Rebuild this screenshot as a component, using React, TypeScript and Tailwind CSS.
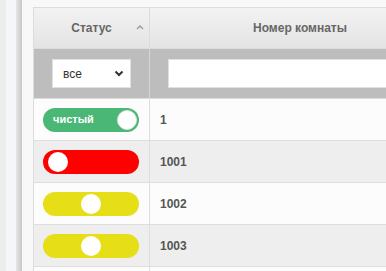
import React from "react";

type Row = { room: string; status: "clean" | "dirty" | "check" | "none" };

const rows: Row[] = [
  { room: "1", status: "clean" },
  { room: "1001", status: "dirty" },
  { room: "1002", status: "check" },
  { room: "1003", status: "check" },
  { room: "", status: "none" },
];

function StatusToggle({ status }: { status: Row["status"] }) {
  if (status === "none") return null;
  if (status === "clean") {
    return (
      <div className="flex h-[24px] w-[96px] items-center justify-between rounded-full bg-[#4bb776] pl-[10px] pr-[2px]">
        <span className="text-[11px] font-bold text-white">чистый</span>
        <span className="h-[20px] w-[20px] rounded-full border border-[#e2e2e2] bg-white" />
      </div>
    );
  }
  if (status === "dirty") {
    return (
      <div className="flex h-[24px] w-[96px] items-center rounded-full bg-[#ff0000] pl-[5px]">
        <span className="h-[20px] w-[20px] rounded-full bg-white" />
      </div>
    );
  }
  return (
    <div className="flex h-[24px] w-[96px] items-center justify-center rounded-full bg-[#e6df18]">
      <span className="h-[20px] w-[20px] rounded-full bg-white" />
    </div>
  );
}

export default function App() {
  return (
    <div
      className="flex h-[271px] w-[386px] overflow-hidden bg-[#f8f8f8]"
      style={{ fontFamily: "'Liberation Sans', Arial, sans-serif" }}
    >
      <div className="w-[6px] shrink-0 bg-[#ececec]" />
      <div className="w-[10px] shrink-0 bg-[#f4f6f9]" />
      <div className="w-[6px] shrink-0 bg-gradient-to-r from-[#e6e6e6] to-[#c8c8c8]" />
      <div className="flex-1 pl-[11px] pt-[7px]">
        <div className="w-[420px] border-l border-t border-[#dcdcdc]">
          {/* header */}
          <div className="flex h-[41px] border-b border-[#dcdcdc] bg-gradient-to-b from-[#f2f2f2] to-[#e4e4e4] text-[12px] font-bold text-[#666]">
            <div className="relative flex w-[116px] items-center justify-center border-r border-[#dcdcdc]">
              Статус
              <svg className="absolute right-[5px] top-[16px]" width="8" height="6" viewBox="0 0 8 6">
                <path d="M1 5 L4 2 L7 5" fill="none" stroke="#999" strokeWidth="1.4" />
              </svg>
            </div>
            <div className="flex w-[300px] items-center justify-center">Номер комнаты</div>
          </div>
          {/* filter row */}
          <div className="flex h-[50px] border-b border-[#dcdcdc] bg-[#bdbdbd]">
            <div className="flex w-[116px] items-center border-r border-[#d6d6d6] pl-[18px]">
              <div className="flex h-[29px] w-[79px] items-center justify-between border border-[#e0e0e0] bg-white pl-[10px] pr-[6px] text-[12px] text-[#333]">
                все
                <svg width="10" height="7" viewBox="0 0 10 7">
                  <path d="M1.5 1.5 L5 5 L8.5 1.5" fill="none" stroke="#333" strokeWidth="2" />
                </svg>
              </div>
            </div>
            <div className="flex w-[300px] items-center pl-[18px]">
              <div className="h-[29px] w-[260px] border border-[#e0e0e0] bg-white" />
            </div>
          </div>
          {rows.map((r, i) => (
            <div
              key={i}
              className={`flex h-[42px] border-b border-[#dedede] ${i % 2 === 0 ? "bg-[#fcfcfc]" : "bg-[#eeeeee]"}`}
            >
              <div className="flex w-[116px] items-center border-r border-[#dedede] pl-[9px]">
                <StatusToggle status={r.status} />
              </div>
              <div className="flex w-[300px] items-center pl-[10px] text-[12px] font-bold text-[#555]">
                {r.room}
              </div>
            </div>
          ))}
        </div>
      </div>
    </div>
  );
}
